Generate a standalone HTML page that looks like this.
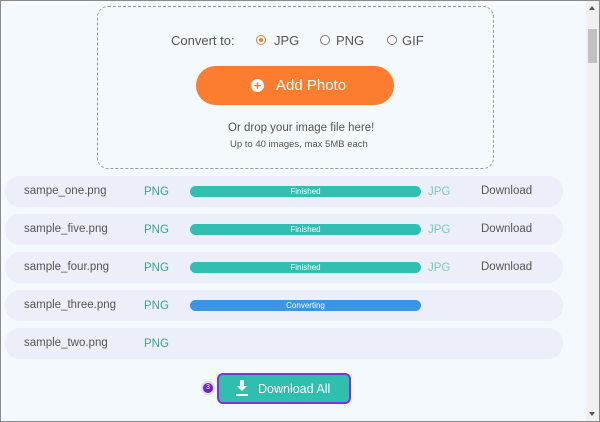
<!DOCTYPE html>
<html><head><style>
*{margin:0;padding:0;box-sizing:border-box}
body{width:600px;height:422px;overflow:hidden;background:#fff;font-family:"Liberation Sans",sans-serif;position:relative}
.frame{position:absolute;left:0;top:0;width:600px;height:422px;border:1px solid #8a8a8a;background:#f3f9fd}
.abs{position:absolute}
.dash{left:96px;top:5px;width:397px;height:163px;border:1.5px dashed #9a9a9a;border-radius:11px}
.t{position:absolute;color:#555;font-size:13px;white-space:nowrap}
.radio{position:absolute;width:10px;height:10px;border:1px solid #777;border-radius:50%;background:#fff}
.add{left:195px;top:65px;width:198px;height:39px;background:#fc7d2f;border-radius:20px;color:#fff;font-size:15px}
.row{position:absolute;left:4px;width:558px;height:31px;background:#eceff9;border-radius:15px}
.row .n{left:19px;top:9px;font-size:11.5px;color:#555}
.row .p{left:139px;top:10px;font-size:11.5px;color:#3aa58a}
.row .j{left:423px;top:10px;font-size:11.5px;color:#7cc8bb}
.row .d{left:476px;top:9px;font-size:11.5px;color:#555}
.bar{position:absolute;left:185px;top:10px;width:231px;height:11px;border-radius:6px;color:#fff;font-size:8px;text-align:center;line-height:11px}
.g{background:#30bfb0}.b{background:#3a95e4}
</style></head><body>
<div class="frame">
<div class="abs" style="left:585px;top:0;width:13px;height:420px;background:#f1f1f1"></div>
<div class="abs" style="left:587px;top:28px;width:9px;height:34px;background:#c1c1c1"></div>
<div class="abs" style="left:588px;top:5px;width:0;height:0;border-left:3px solid transparent;border-right:3px solid transparent;border-bottom:4px solid #555"></div>
<div class="abs" style="left:588px;top:411px;width:0;height:0;border-left:3px solid transparent;border-right:3px solid transparent;border-top:4px solid #555"></div>

<div class="abs dash"></div>
<div class="t" style="left:170px;top:32px">Convert to:</div>
<div class="radio" style="left:255px;top:34px;border-color:#f07a3a"><div style="position:absolute;left:2px;top:2px;width:4px;height:4px;border-radius:50%;background:#f07a3a"></div></div>
<div class="t" style="left:273px;top:32px">JPG</div>
<div class="radio" style="left:319px;top:34px"></div>
<div class="t" style="left:335px;top:32px">PNG</div>
<div class="radio" style="left:386px;top:34px"></div>
<div class="t" style="left:401px;top:32px">GIF</div>
<div class="abs add">
 <div class="abs" style="left:55px;top:13px;width:13px;height:13px;border-radius:50%;background:#fff;color:#fc7d2f;font-size:13px;line-height:13px;text-align:center;font-weight:bold">+</div>
 <div class="abs" style="left:80px;top:11px">Add Photo</div>
</div>
<div class="t" style="left:227px;top:121px;font-size:11.5px">Or drop your image file here!</div>
<div class="t" style="left:229px;top:138px;font-size:9.5px">Up to 40 images, max 5MB each</div>

<div class="row" style="top:175px"><div class="t n">sampe_one.png</div><div class="t p">PNG</div><div class="bar g">Finished</div><div class="t j">JPG</div><div class="t d">Download</div></div>
<div class="row" style="top:213px"><div class="t n">sample_five.png</div><div class="t p">PNG</div><div class="bar g">Finished</div><div class="t j">JPG</div><div class="t d">Download</div></div>
<div class="row" style="top:251px"><div class="t n">sample_four.png</div><div class="t p">PNG</div><div class="bar g">Finished</div><div class="t j">JPG</div><div class="t d">Download</div></div>
<div class="row" style="top:289px"><div class="t n">sample_three.png</div><div class="t p">PNG</div><div class="bar b">Converting</div></div>
<div class="row" style="top:327px"><div class="t n">sample_two.png</div><div class="t p">PNG</div></div>

<div class="abs" style="left:200px;top:380px;width:14px;height:14px;border-radius:50%;background:#6b22c8;border:2px solid #ddd;color:#fff;font-size:7px;text-align:center;line-height:10px">3</div>
<div class="abs" style="left:216px;top:372px;width:134px;height:31px;border:2px solid #8b2be2;border-radius:6px;background:#2fbfae;color:#fff;font-size:12.5px">
 <svg class="abs" style="left:17px;top:5px" width="12" height="17" viewBox="0 0 12 17"><path d="M4 0h4v6h3l-5 5-5-5h3z" fill="#fff"/><rect x="0" y="14" width="12" height="2" fill="#fff"/></svg>
 <div class="abs" style="left:39px;top:7px">Download All</div>
</div>
</div>
</body></html>
